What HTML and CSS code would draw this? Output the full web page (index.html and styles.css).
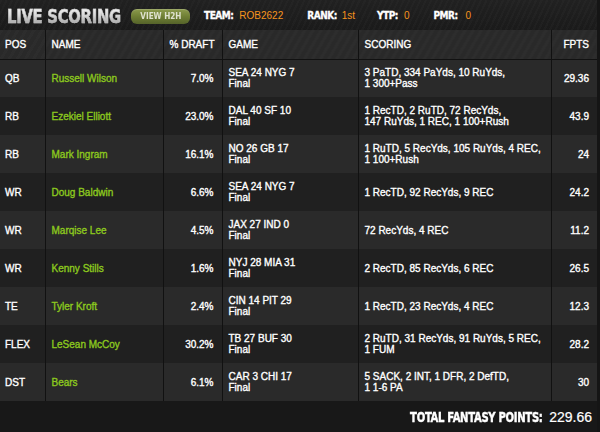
FILE: index.html
```html
<!DOCTYPE html>
<html>
<head>
<meta charset="utf-8">
<link rel="stylesheet" href="styles.css">
</head>
<body>
<div class="page">
  <header class="topbar">
    <h1 class="title"><span class="title-text">LIVE SCORING</span></h1>
    <button class="h2h"><span class="h2h-text">VIEW H2H</span></button>
    <div class="stat stat-team"><span class="lbl">TEAM:</span><span class="val">ROB2622</span></div>
    <div class="stat stat-rank"><span class="lbl">RANK:</span><span class="val">1st</span></div>
    <div class="stat stat-ytp"><span class="lbl">YTP:</span><span class="val">0</span></div>
    <div class="stat stat-pmr"><span class="lbl">PMR:</span><span class="val">0</span></div>
  </header>
  <table class="scores">
    <colgroup>
      <col class="c-pos"><col class="c-name"><col class="c-draft"><col class="c-game"><col class="c-scoring"><col class="c-fpts">
    </colgroup>
    <thead>
      <tr><th>POS</th><th>NAME</th><th class="r">% DRAFT</th><th>GAME</th><th>SCORING</th><th class="r">FPTS</th></tr>
    </thead>
    <tbody>
      <tr><td>QB</td><td class="name">Russell Wilson</td><td class="r">7.0%</td><td>SEA 24 NYG 7<br>Final</td><td>3 PaTD, 334 PaYds, 10 RuYds,<br>1 300+Pass</td><td class="r">29.36</td></tr>
      <tr><td>RB</td><td class="name">Ezekiel Elliott</td><td class="r">23.0%</td><td>DAL 40 SF 10<br>Final</td><td>1 RecTD, 2 RuTD, 72 RecYds,<br>147 RuYds, 1 REC, 1 100+Rush</td><td class="r">43.9</td></tr>
      <tr><td>RB</td><td class="name">Mark Ingram</td><td class="r">16.1%</td><td>NO 26 GB 17<br>Final</td><td>1 RuTD, 5 RecYds, 105 RuYds, 4 REC,<br>1 100+Rush</td><td class="r">24</td></tr>
      <tr><td>WR</td><td class="name">Doug Baldwin</td><td class="r">6.6%</td><td>SEA 24 NYG 7<br>Final</td><td>1 RecTD, 92 RecYds, 9 REC</td><td class="r">24.2</td></tr>
      <tr><td>WR</td><td class="name">Marqise Lee</td><td class="r">4.5%</td><td>JAX 27 IND 0<br>Final</td><td>72 RecYds, 4 REC</td><td class="r">11.2</td></tr>
      <tr><td>WR</td><td class="name">Kenny Stills</td><td class="r">1.6%</td><td>NYJ 28 MIA 31<br>Final</td><td>2 RecTD, 85 RecYds, 6 REC</td><td class="r">26.5</td></tr>
      <tr><td>TE</td><td class="name">Tyler Kroft</td><td class="r">2.4%</td><td>CIN 14 PIT 29<br>Final</td><td>1 RecTD, 23 RecYds, 4 REC</td><td class="r">12.3</td></tr>
      <tr><td>FLEX</td><td class="name">LeSean McCoy</td><td class="r">30.2%</td><td>TB 27 BUF 30<br>Final</td><td>2 RuTD, 31 RecYds, 91 RuYds, 5 REC,<br>1 FUM</td><td class="r">28.2</td></tr>
      <tr><td>DST</td><td class="name">Bears</td><td class="r">6.1%</td><td>CAR 3 CHI 17<br>Final</td><td>5 SACK, 2 INT, 1 DFR, 2 DefTD,<br>1 1-6 PA</td><td class="r">30</td></tr>
    </tbody>
  </table>
  <footer class="total">
    <span class="total-lbl">TOTAL FANTASY POINTS:</span>
    <span class="total-val">229.66</span>
  </footer>
</div>
</body>
</html>
```

FILE: styles.css
```css
* { box-sizing: border-box; }
html, body { margin: 0; padding: 0; }
body {
  background: #151515;
  width: 600px;
  height: 432px;
  overflow: hidden;
  font-family: "Liberation Sans", Arial, sans-serif;
  color: #fff;
}
.page {
  width: 597px;
  background: #181818;
}
.topbar {
  height: 30px;
  display: flex;
  align-items: center;
  background:
    repeating-linear-gradient(115deg, rgba(255,255,255,0.015) 0 2px, rgba(0,0,0,0.03) 2px 5px),
    linear-gradient(#222 0%, #1b1b1b 100%);
  padding-left: 7px;
}
.title {
  margin: 1px 0 0 0;
  width: 122px;
  flex: none;
  font-size: 20px;
  line-height: 20px;
  white-space: nowrap;
}
.title-text {
  display: inline-block;
  font-family: "DejaVu Sans Condensed", "DejaVu Sans", sans-serif;
  font-weight: bold;
  letter-spacing: -0.3px;
  transform: scaleX(0.82);
  transform-origin: left center;
  background: linear-gradient(#f6f6f6 0%, #dadada 45%, #9a9a9a 100%);
  -webkit-background-clip: text;
  background-clip: text;
  color: transparent;
  -webkit-text-stroke: 0.5px rgba(200,200,200,0.7);
}
.h2h {
  margin: 3px 0 0 2px;
  width: 59px;
  height: 15px;
  flex: none;
  border: 0;
  border-radius: 6px;
  padding: 0;
  background: linear-gradient(#8c9b4e 0%, #6f7f34 50%, #55632a 100%);
  box-shadow: inset 0 1px 0 rgba(255,255,255,0.15);
  color: #dfe2cf;
  font-family: "DejaVu Sans Condensed", "DejaVu Sans", sans-serif;
  font-weight: bold;
  font-size: 9px;
  line-height: 15px;
  text-align: center;
}
.h2h-text {
  display: inline-block;
  transform: scaleX(0.9);
}
.stat {
  display: flex;
  align-items: baseline;
  margin-top: 1px;
}
.stat-team { margin-left: 14px; }
.stat-rank { margin-left: 24px; }
.stat-ytp { margin-left: 22px; }
.stat-pmr { margin-left: 24px; }
.lbl {
  font-family: "DejaVu Sans Condensed", "DejaVu Sans", sans-serif;
  font-weight: bold;
  font-size: 10px;
  letter-spacing: -0.5px;
  color: #fff;
  -webkit-text-stroke: 0.3px #fff;
}
.val {
  font-size: 10px;
  color: #f7941d;
  margin-left: 6px;
}
.stat-rank .val { margin-left: 5px; }
.stat-ytp .val { margin-left: 6px; }
.stat-pmr .val { margin-left: 8px; }

.scores {
  width: 597px;
  border-collapse: collapse;
  table-layout: fixed;
  font-size: 10px;
  line-height: 11px;
}
.c-pos { width: 45px; }
.c-name { width: 118px; }
.c-draft { width: 59px; }
.c-game { width: 136px; }
.c-scoring { width: 193px; }
.c-fpts { width: 46px; }
th, td {
  text-align: left;
  vertical-align: middle;
  padding: 0 5px 0 6px;
  white-space: nowrap;
  -webkit-text-stroke: 0.35px currentColor;
}
th + th, td + td { border-left: 1px solid #111; }
th:first-child, td:first-child { padding-left: 5px; }
th {
  height: 29px;
  font-weight: normal;
  color: #fff;
  background:
    repeating-linear-gradient(120deg, rgba(255,255,255,0.012) 0 3px, rgba(0,0,0,0.025) 3px 7px),
    #2a2a2a;
  border-bottom: 1px solid #111;
  padding-top: 1px;
}
td { height: 38px; color: #fff; }
tbody tr:nth-child(odd) td { background: #2a2a2a; }
tbody tr:nth-child(even) td { background: #202020; }
th.r, td.r { text-align: right; padding-right: 8px; }
td.name { color: #8cc81e; }
.total {
  height: 31px;
  display: flex;
  justify-content: flex-end;
  align-items: center;
  padding-right: 5px;
  background: #181818;
}
.total-lbl {
  display: inline-block;
  font-family: "DejaVu Sans Condensed", "DejaVu Sans", sans-serif;
  font-weight: bold;
  font-size: 14px;
  letter-spacing: -0.4px;
  color: #fff;
  -webkit-text-stroke: 0.4px #fff;
  transform: scaleX(0.8);
  transform-origin: right center;
}
.total-val {
  margin-left: 7px;
  font-size: 14px;
  color: #fff;
  -webkit-text-stroke: 0.2px #fff;
}
```
